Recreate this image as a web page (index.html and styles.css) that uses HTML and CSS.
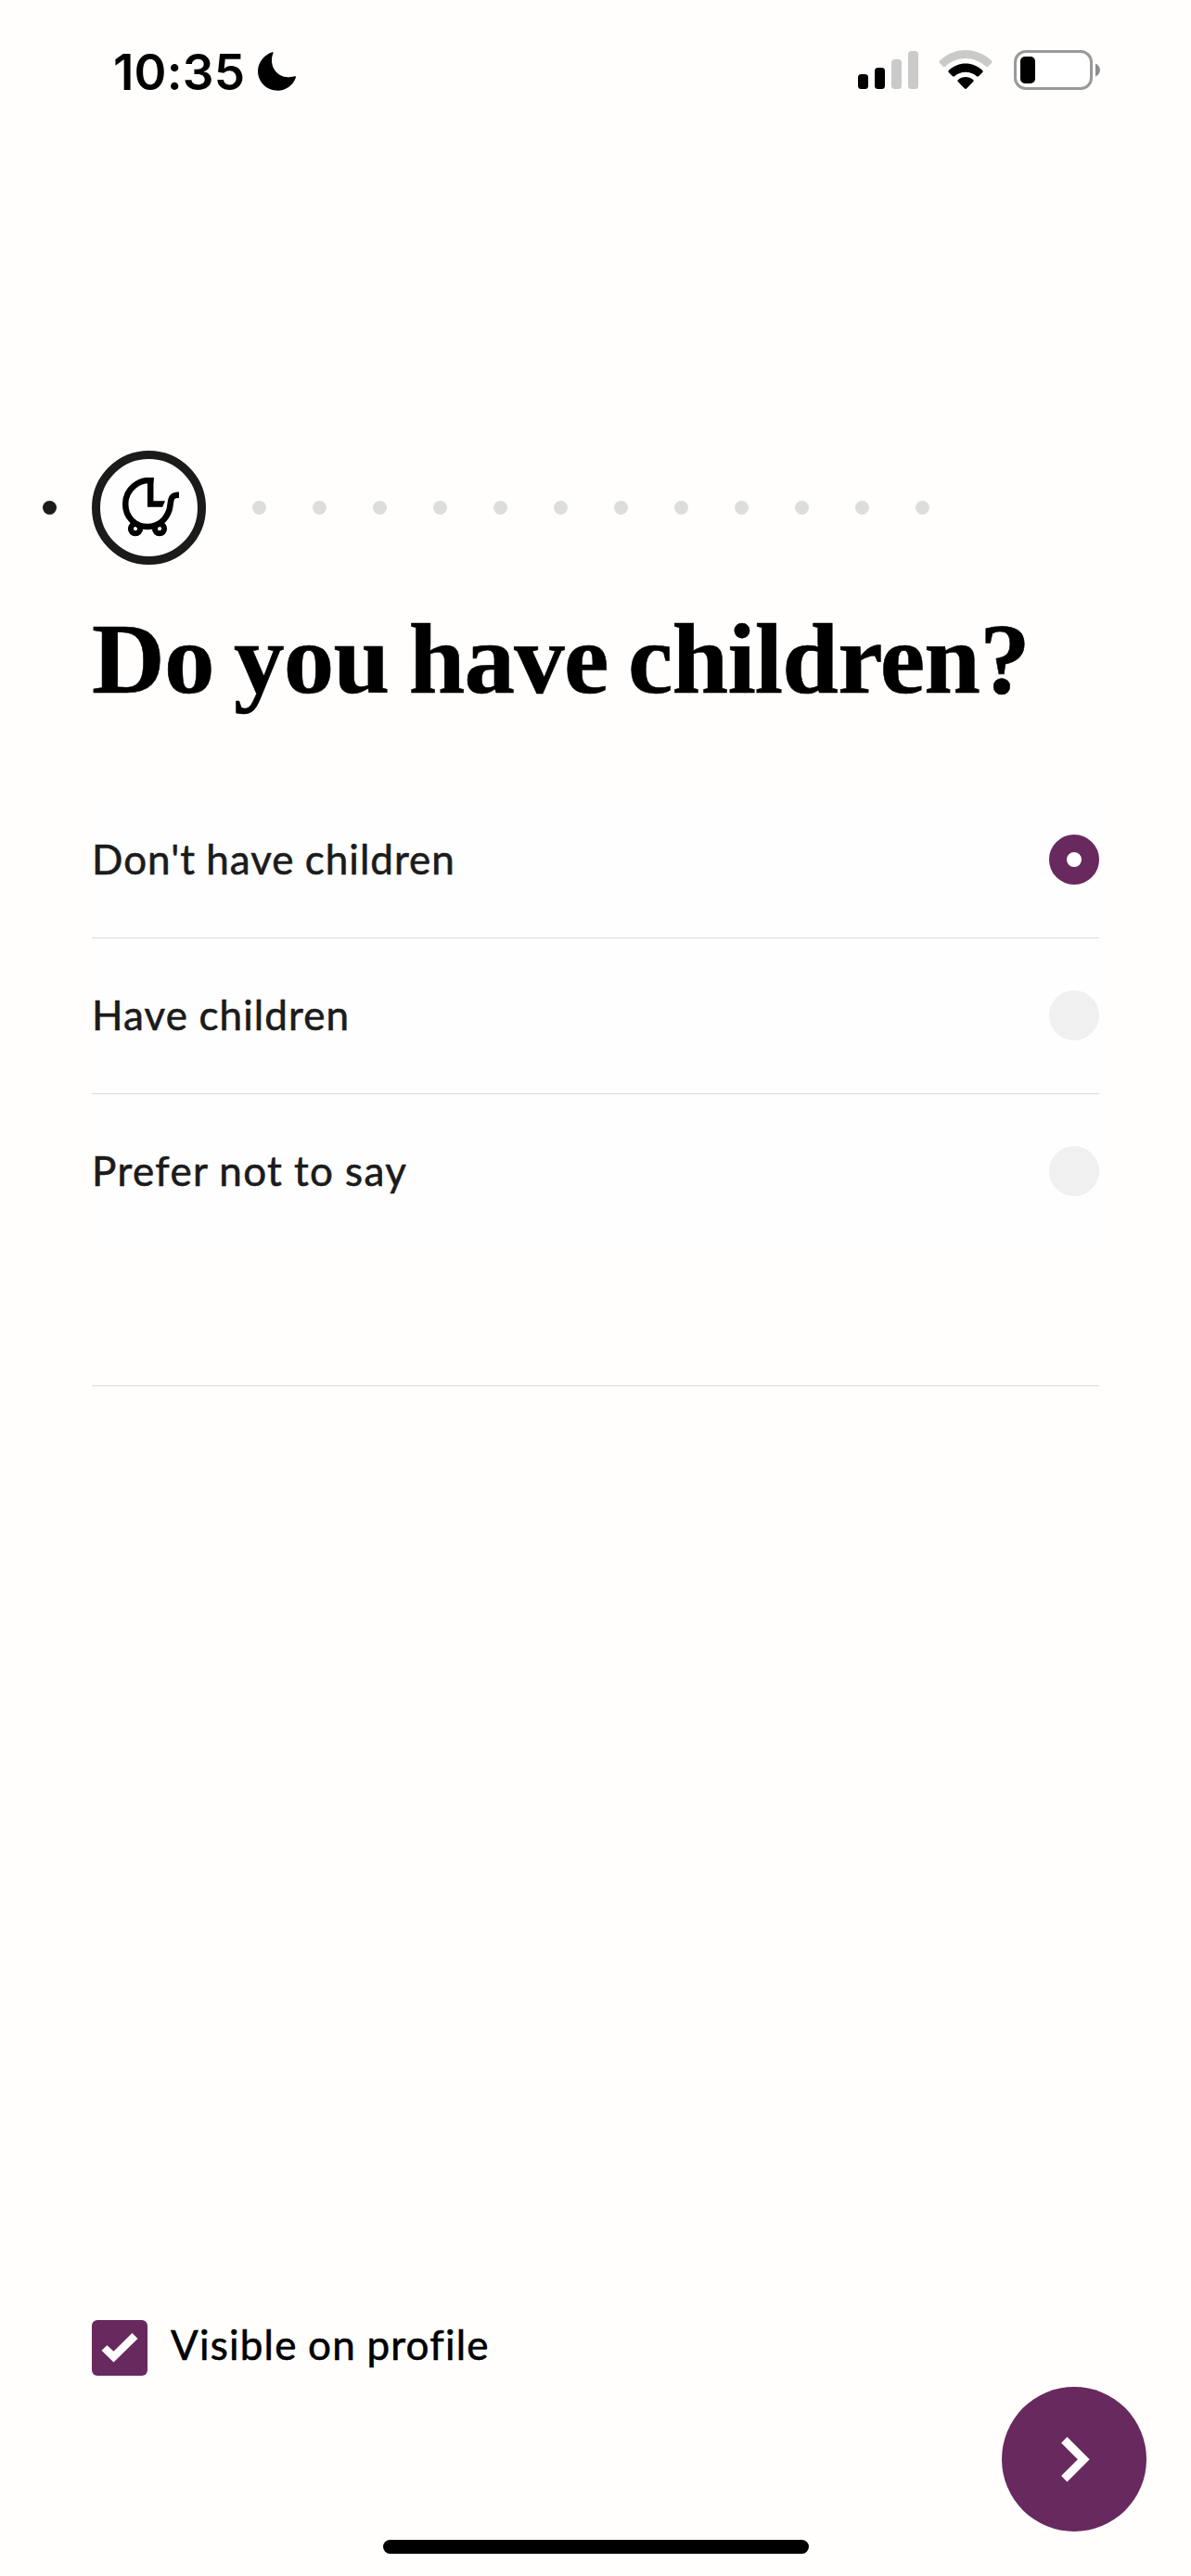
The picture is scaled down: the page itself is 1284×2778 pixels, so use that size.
FILE: index.html
```html
<!DOCTYPE html>
<html lang="en">
<head>
<meta charset="utf-8">
<title>Do you have children?</title>
<link rel="stylesheet" href="styles.css">
</head>
<body>
<div class="screen">
  <header class="status">
    <span class="time">10:35</span>
    <svg class="moon" width="42" height="42" viewBox="0 0 42 42"><path d="M15.500 .2C17 0 16.800 1 16.300 2C14.500 6 14.300 13 17.500 18.500C21.500 25.500 30 28.800 38.500 26.500C40.500 25.800 41.500 26 40.800 28C37.500 36.500 30 41.700 21.500 41.700C9.500 41.700 0 32.500 0 20.500C0 11.500 6.500 3.200 15.500 .2Z"/></svg>
    <svg class="signal" width="65" height="41" viewBox="0 0 65 41"><rect y="25" width="11" height="16" rx="3.500"/><rect x="18" y="18" width="11" height="23" rx="3.500"/><g fill="#cbcaca"><rect x="36" y="9" width="11" height="32" rx="3.500"/><rect x="54" width="11" height="41" rx="3.500"/></g></svg>
    <svg class="wifi" width="58" height="43" viewBox="0 0 58 43"><path fill="#cbcaca" d="M.8 11.800C17 -3.900 41-3.900 57.200 11.800Q58 12.800 57.200 13.700L53 17.900Q52 18.700 51 17.800C38.500 6 19.500 6 7 17.800Q6 18.700 5 17.900L.8 13.700Q0 12.800.8 11.800Z"/><path d="M10.700 22C21 12 37 12 47.300 22Q48.200 23 47.300 23.900L43 28.200Q42 29 41 28.200C34.500 22.200 23.500 22.200 17 28.200Q16 29 15 28.200L10.700 23.900Q9.800 23 10.700 22Z"/><path d="M20.700 32.200C25.500 28 32.500 28 37.300 32.200Q38.200 33 37.300 34L30 41.500Q29 42.400 28 41.500L20.700 34Q19.800 33 20.700 32.200Z"/></svg>
    <svg class="battery" width="95" height="43" viewBox="0 0 95 43"><rect x="1.500" y="1.500" width="82" height="40" rx="11.500" fill="#fff" stroke="#999" stroke-width="3"/><rect x="7" y="7" width="16" height="29" rx="5"/><path fill="#8c8c8c" d="M88 14.500C94.500 17 94.500 26 88 28.500Z"/></svg>
  </header>

  <div class="steps">
    <i class="dot done"></i>
    <div class="current">
      <svg width="64" height="66" viewBox="0 0 64 66" fill="none" stroke="#000" stroke-width="6.500"><path d="M34.600 3.300C18 1 4.200 13 4.200 28.500C4.200 43 15 53 28 53C41 53 48.500 44 51.500 35C54 26 51 18.700 62 18.700"/><path d="M31.200 2V28.400H44"/><path stroke="none" fill="#000" d="M43.500 25.200H47L44.300 31.600H43.500Z"/><g stroke-width="6"><circle cx="15" cy="55.200" r="5.100"/><circle cx="41" cy="55.200" r="5.100"/></g></svg>
    </div>
    <i class="dot"></i><i class="dot"></i><i class="dot"></i><i class="dot"></i><i class="dot"></i><i class="dot"></i><i class="dot"></i><i class="dot"></i><i class="dot"></i><i class="dot"></i><i class="dot"></i><i class="dot"></i>
  </div>

  <h1 class="title">Do you have children?</h1>

  <div class="options">
    <div class="option"><span class="label none">Don't have children</span><i class="radio on"></i></div>
    <div class="option"><span class="label have">Have children</span><i class="radio"></i></div>
    <div class="option"><span class="label">Prefer not to say</span><i class="radio"></i></div>
  </div>
  <div class="rule"></div>

  <footer class="footer">
    <div class="visible">
      <span class="check"><svg width="60" height="60" viewBox="0 0 60 60"><path fill="#fffefe" d="M16.500 27.200L23.500 33.800L43.500 14L49.500 20L23.500 45.500L10.500 32.700Z"/></svg></span>
      <span class="label profile">Visible on profile</span>
    </div>
    <div class="next"><svg width="156" height="156" viewBox="0 0 156 156" fill="none" stroke="#fffefe" stroke-width="9"><path d="M67.300 57.300L88.300 78.300L67.300 99.300"/></svg></div>
  </footer>
  <div class="home"></div>
</div>
</body>
</html>
```
FILE: styles.css
```css
body { margin: 0; background: #fffefc; }
.screen { display: flex; flex-direction: column; box-sizing: border-box; width: 1284px; height: 2778px; padding-bottom: 24px; overflow: hidden; background: #fffefc; }
svg { display: block; }
.status { display: flex; box-sizing: border-box; flex: none; align-items: flex-start; height: 432px; padding: 54px 96px 0 122px; }
.time { width: 156px; font: 600 53px/48px Inter, sans-serif; letter-spacing: 0.2px; white-space: nowrap; }
.moon { margin-top: 2px; }
.signal { margin: 1px 22px 0 auto; }
.wifi { margin-right: 23px; }
.steps { display: flex; flex: none; align-items: center; height: 123px; margin-top: 54px; padding-left: 46px; gap: 50px; }
.dot { flex: none; width: 15px; height: 15px; border-radius: 50%; background: #dedddd; }
.dot.done { margin-right: -12px; background: #1c1c1c; }
.current { box-sizing: border-box; flex: none; width: 123px; height: 123px; border: 9px solid #1b1b1b; border-radius: 50%; padding: 20px 0 0 23px; background: #fffefe; }
.title { flex: none; margin: 32px 0 0 99px; font: 700 109px/140px "Liberation Serif", serif; letter-spacing: -0.8px; word-spacing: -5px; white-space: nowrap; color: #000; -webkit-text-stroke: 0.6px #000; }
.options { flex: none; margin: 85px 99px 0; background: #fefefe; }
.option { display: flex; align-items: center; justify-content: space-between; box-sizing: border-box; height: 168px; padding-bottom: 1px; border-bottom: 1px solid #dbdbdb; }
.option:first-child { height: 146px; padding-bottom: 23px; }
.option:last-child { border-bottom-color: transparent; }
.label { padding-bottom: 2px; font: 400 44px/54px Lato, sans-serif; letter-spacing: 1.4px; word-spacing: -1px; color: #1b1b1b; white-space: nowrap; -webkit-text-stroke: 0.6px currentColor; }
.none { letter-spacing: 1px; }
.have { letter-spacing: 1.1px; }
.profile { padding-bottom: 8px; letter-spacing: 1.2px; color: #000; }
.radio { box-sizing: border-box; width: 54px; height: 54px; border-radius: 50%; background: #f0f0f0; }
.radio.on { border: 19px solid #68295f; background: #fffefe; }
.rule { flex: none; height: 1px; margin: 146px 99px 0; background: #dbdbdb; }
.footer { display: flex; flex: none; align-items: flex-end; justify-content: space-between; margin: auto 48px 9px 99px; }
.visible { display: flex; align-items: center; gap: 25px; margin-bottom: 167px; }
.check { width: 60px; height: 60px; border-radius: 6px; background: #68295f; }
.next { width: 156px; height: 156px; border-radius: 50%; background: #68295f; }
.home { flex: none; align-self: center; width: 459px; height: 15px; border-radius: 8px; background: #000; }
```
